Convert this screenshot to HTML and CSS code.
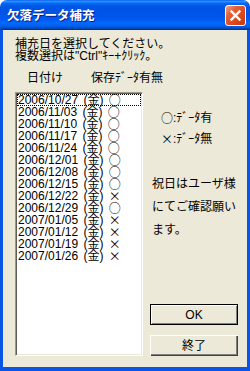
FILE: index.html
```html
<!DOCTYPE html>
<html lang="ja">
<head>
<meta charset="utf-8">
<title>欠落データ補充</title>
<link rel="stylesheet" href="styles.css">
</head>
<body>
<div class="window">
  <div class="titlebar">
    <span class="title">欠落データ補充</span>
    <span class="close" aria-label="閉じる">
      <svg width="13" height="13" viewBox="0 0 13 13"><path d="M2.5 2.5 L10.5 10.5 M10.5 2.5 L2.5 10.5" stroke="#fff" stroke-width="2.4" stroke-linecap="square" fill="none"/></svg>
    </span>
  </div>
  <div class="client">
    <p class="instructions">補充日を選択してください。<br>複数選択は"Ctrl"ｷｰ+ｸﾘｯｸ。</p>
    <div class="colheads"><span class="head-date">日付け</span><span class="head-saved">保存ﾃﾞｰﾀ有無</span></div>
    <div class="main">
      <ul class="listbox">
        <li class="item focus">2006/10/27 (金) <span class="mark">○</span></li>
        <li class="item">2006/11/03 (金) <span class="mark">○</span></li>
        <li class="item">2006/11/10 (金) <span class="mark">○</span></li>
        <li class="item">2006/11/17 (金) <span class="mark">○</span></li>
        <li class="item">2006/11/24 (金) <span class="mark">○</span></li>
        <li class="item">2006/12/01 (金) <span class="mark">○</span></li>
        <li class="item">2006/12/08 (金) <span class="mark">○</span></li>
        <li class="item">2006/12/15 (金) <span class="mark">○</span></li>
        <li class="item">2006/12/22 (金) <span class="mark">×</span></li>
        <li class="item">2006/12/29 (金) <span class="mark">○</span></li>
        <li class="item">2007/01/05 (金) <span class="mark">×</span></li>
        <li class="item">2007/01/12 (金) <span class="mark">×</span></li>
        <li class="item">2007/01/19 (金) <span class="mark">×</span></li>
        <li class="item">2007/01/26 (金) <span class="mark">×</span></li>
      </ul>
      <div class="side">
        <div class="legend">
          <div class="legend-row"><span class="mark">○</span>:ﾃﾞｰﾀ有</div>
          <div class="legend-row"><span class="mark">×</span>:ﾃﾞｰﾀ無</div>
        </div>
        <p class="note">祝日はユーザ様<br>にてご確認願い<br>ます。</p>
        <div class="buttons">
          <button class="btn btn-default">OK</button>
          <button class="btn">終了</button>
        </div>
      </div>
    </div>
  </div>
</div>
</body>
</html>
```
FILE: styles.css
```css
html, body {
  margin: 0;
  padding: 0;
  background: #ffffff;
}
body {
  font-family: "Liberation Sans", "Noto Sans CJK JP", "Noto Sans CJK SC", sans-serif;
  font-size: 12px;
  line-height: 12px;
  color: #000;
}
.mark {
  display: inline-block;
  width: 12px;
  height: 12px;
  line-height: 12px;
  vertical-align: top;
  text-align: center;
  font-family: "Noto Sans CJK JP", sans-serif;
}
.window {
  width: 250px;
  height: 371px;
  display: flex;
  flex-direction: column;
  border-radius: 7px 7px 0 0;
  overflow: hidden;
}
.titlebar {
  height: 30px;
  flex: none;
  box-sizing: border-box;
  display: flex;
  align-items: center;
  justify-content: space-between;
  padding: 0 4px 0 7px;
  background: linear-gradient(to bottom,
    #0058ee 0%, #3593ff 4%, #288eff 6%, #127dff 8%, #036ffc 10%,
    #0262ee 14%, #0057e5 20%, #0054e3 24%, #0055eb 56%, #005bf5 66%,
    #026afe 76%, #0062ef 86%, #0052d6 92%, #0040ab 96%, #003092 100%);
}
.title {
  color: #fff;
  font-family: "Noto Sans CJK JP", sans-serif;
  font-weight: bold;
  font-size: 12.5px;
  line-height: 14px;
  text-shadow: 1px 1px 0 #0a1e8c;
}
.close {
  width: 21px;
  height: 21px;
  box-sizing: border-box;
  border: 1px solid #fff;
  border-radius: 3px;
  background: linear-gradient(135deg, #f2a384 0%, #e4603a 30%, #dc4a22 60%, #c5390f 100%);
  display: flex;
  align-items: center;
  justify-content: center;
}
.close svg {
  display: block;
}
.client {
  flex: 1;
  min-height: 0;
  box-sizing: border-box;
  display: flex;
  flex-direction: column;
  background: #ece9d8;
  border-style: solid;
  border-color: #0a55e5;
  border-width: 0 3px 4px 3px;
  padding: 8px 9px 11px 12px;
}
.instructions {
  margin: 0;
  line-height: 12px;
  white-space: nowrap;
}
.colheads {
  margin-top: 10px;
  display: flex;
  padding-left: 12px;
  height: 12px;
}
.head-date {
  width: 64px;
}
.main {
  margin-top: 8px;
  flex: 1;
  min-height: 0;
  display: flex;
  gap: 7px;
}
.listbox {
  width: 128px;
  box-sizing: border-box;
  margin: 0;
  padding: 1px;
  list-style: none;
  background: #fff;
  border: 1px solid;
  border-color: #9d9a8c #ffffff #ffffff #9d9a8c;
  box-shadow: inset 1px 1px 0 #5f5d55, inset -1px -1px 0 #ece9d8;
}
.item {
  height: 12px;
  line-height: 12px;
  padding-left: 1px;
  white-space: nowrap;
  word-spacing: 2px;
}
.item.focus {
  outline: 1px dotted #000;
  outline-offset: -1px;
}
.side {
  width: 88px;
  display: flex;
  flex-direction: column;
}
.legend {
  margin-top: 20px;
  padding-left: 11px;
  display: flex;
  flex-direction: column;
  gap: 9px;
}
.legend-row {
  height: 12px;
  white-space: nowrap;
}
.note {
  margin: 28px 0 0;
  padding-left: 2px;
  line-height: 23px;
  white-space: nowrap;
}
.buttons {
  margin-top: auto;
  display: flex;
  flex-direction: column;
  gap: 10px;
}
.btn {
  width: 88px;
  height: 21px;
  box-sizing: border-box;
  margin: 0;
  padding: 0;
  font: inherit;
  color: #000;
  background: #ece9d8;
  border: none;
  box-shadow: inset 1px 1px 0 #ffffff, inset -1px -1px 0 #404040, inset -2px -2px 0 #808080;
}
.btn-default {
  border: 1px solid #000;
  box-shadow: inset 1px 1px 0 #ffffff, inset -1px -1px 0 #808080;
}
```
